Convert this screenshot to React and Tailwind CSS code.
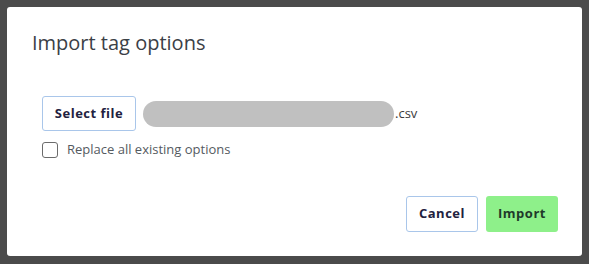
import React, { useState } from "react";

const App = () => {
  const [replaceAll, setReplaceAll] = useState(false);

  return (
    <div
      className="w-[589px] h-[264px] bg-[#4b4b4b] pt-[7px] pl-[7px]"
      style={{ fontFamily: "'Open Sans', Lato, sans-serif" }}
    >
      <div className="w-[575px] h-[249px] bg-white rounded-[3px] flex flex-col">
        {/* Header */}
        <h1 className="pl-[25px] pt-[23px] text-[20px] leading-[26px] text-[#3b4046]">
          Import tag options
        </h1>

        {/* File picker */}
        <div className="pl-[35px] pt-[40px] flex items-center">
          <button className="h-[35px] w-[94px] border border-[#a9c6ea] rounded-[3px] text-[13px] font-bold tracking-[0.5px] text-[#1f2240]">
            Select file
          </button>
          <div className="ml-[7px] h-[26px] w-[251px] rounded-full bg-[#c0c0c0]" />
          <span className="ml-[1px] text-[13px] text-[#3a3a3a]">.csv</span>
        </div>

        {/* Option */}
        <label className="pl-[35px] pt-[9px] flex items-center gap-[9px] cursor-pointer">
          <input
            type="checkbox"
            checked={replaceAll}
            onChange={(e) => setReplaceAll(e.target.checked)}
            className="appearance-none w-[16px] h-[16px] border border-[#6b6b6b] rounded-[3px] checked:bg-[#1f2240]"
          />
          <span className="text-[13px] text-[#555a5f]">Replace all existing options</span>
        </label>

        {/* Footer */}
        <div className="mt-auto pb-[24px] pr-[24px] flex justify-end gap-[8px]">
          <button className="h-[36px] w-[72px] border border-[#a9c6ea] rounded-[3px] text-[13px] font-bold tracking-[0.5px] text-[#1f2240]">
            Cancel
          </button>
          <button className="h-[36px] w-[72px] bg-[#8ef08a] rounded-[3px] text-[13px] font-bold tracking-[0.5px] text-[#1f3a2a]">
            Import
          </button>
        </div>
      </div>
    </div>
  );
};

export default App;
